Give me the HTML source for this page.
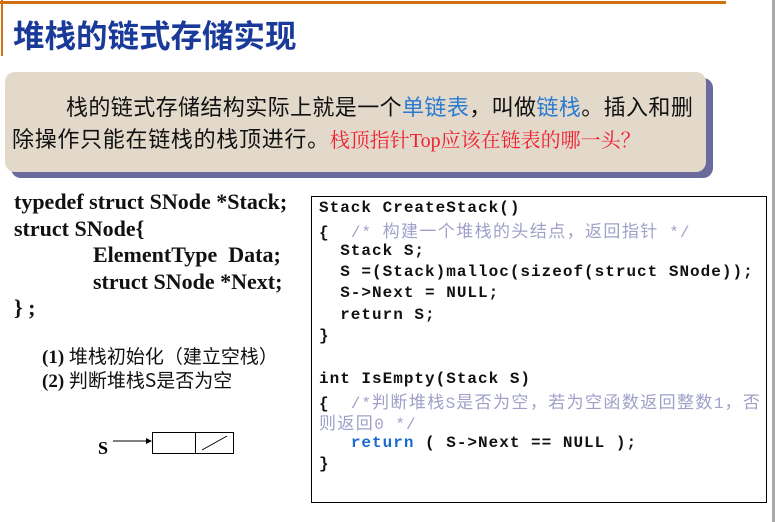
<!DOCTYPE html>
<html><head><meta charset="utf-8"><style>
body{margin:0;width:775px;height:522px;background:#fff;position:relative;overflow:hidden;font-family:"Liberation Serif","Noto Serif CJK SC",serif}
.a{position:absolute;white-space:nowrap}
.code{font-family:"Liberation Mono","Noto Sans CJK SC",monospace;font-weight:bold;font-size:16px;letter-spacing:1px}
.code div{height:21.33px;line-height:21.33px;overflow:visible}
.cm{color:#a0a0c8;font-weight:normal}
.cj{font-family:"Noto Sans CJK SC",sans-serif}
.code .cj{font-size:17px;letter-spacing:1.4px}
</style></head><body>
<div class="a" style="left:0;top:1px;width:726px;height:3px;background:#d07010"></div>
<div class="a" style="left:1px;top:0;width:2px;height:56px;background:#d07010"></div>
<div class="a" style="left:772px;top:0;width:3px;height:522px;background:#a8a8a8"></div>
<div class="a" style="left:13px;top:11px;font-size:31.5px;color:#1a3a9a;font-family:'Noto Sans CJK SC',sans-serif;font-weight:bold">堆栈的链式存储实现</div>
<div class="a" style="left:11px;top:78px;width:702px;height:100px;background:#6a6a9c;border-radius:10px"></div>
<div class="a" style="left:5px;top:72px;width:701px;height:100px;background:#e2d9ca;border-radius:10px"></div>
<div class="a cj" style="left:66px;top:90px;font-size:22px;letter-spacing:0.4px;color:#111">栈的链式存储结构实际上就是一个<span style="color:#2a7ad0">单链表</span>，叫做<span style="color:#2a7ad0">链栈</span>。插入和删</div>
<div class="a cj" style="left:12px;top:122px;font-size:22px;letter-spacing:0.7px;color:#111">除操作只能在链栈的栈顶进行。<span style="color:#f02030;font-family:'Liberation Serif','Noto Serif CJK SC',serif;font-size:20px;letter-spacing:0">栈顶指针Top应该在链表的哪一头？</span></div>
<div class="a" style="left:14px;top:189px;font-size:22px;font-weight:bold;line-height:26.5px;color:#111">typedef struct SNode *Stack;<br>struct SNode{<br><span style="padding-left:79px">ElementType&nbsp; Data;</span><br><span style="padding-left:79px">struct SNode *Next;</span><br>} ;</div>
<div class="a" style="left:42px;top:345px;font-size:19px;line-height:22px;color:#111"><b>(1)</b> <span class="cj">堆栈初始化（建立空栈）</span><br><b>(2)</b> <span class="cj">判断堆栈S是否为空</span></div>
<div class="a" style="left:98px;top:438px;font-size:18px;font-weight:bold">S</div>
<svg class="a" style="left:110px;top:428px" width="130" height="30"><line x1="3" y1="13" x2="40" y2="13" stroke="#000"/><polygon points="42,13 36,10 36,16" fill="#000"/><rect x="42.5" y="4.5" width="81" height="21" fill="none" stroke="#000"/><line x1="85.5" y1="4" x2="85.5" y2="26" stroke="#000"/><line x1="92" y1="22" x2="117" y2="8" stroke="#000"/></svg>
<div class="a" style="left:311px;top:196px;width:454px;height:305px;border:1px solid #000"></div>
<div class="a code" style="left:319px;top:198px;color:#111">
<div>Stack CreateStack()</div>
<div>{ &nbsp;<span class="cm">/* <span class="cj">构建一个堆栈的头结点，返回指针</span> */</span></div>
<div>&nbsp; Stack S;</div>
<div>&nbsp; S =(Stack)malloc(sizeof(struct SNode));</div>
<div>&nbsp; S-&gt;Next = NULL;</div>
<div>&nbsp; return S;</div>
<div>}</div>
<div></div>
<div>int IsEmpty(Stack S)</div>
<div>{ &nbsp;<span class="cm">/*<span class="cj">判断堆栈</span>S<span class="cj">是否为空，若为空函数返回整数</span>1<span class="cj">，否</span></span></div>
<div><span class="cm"><span class="cj">则返回</span>0 */</span></div>
<div>&nbsp;&nbsp; <span style="color:#1a6ad0">return</span> ( S-&gt;Next == NULL );</div>
<div>}</div>
</div>
</body></html>
